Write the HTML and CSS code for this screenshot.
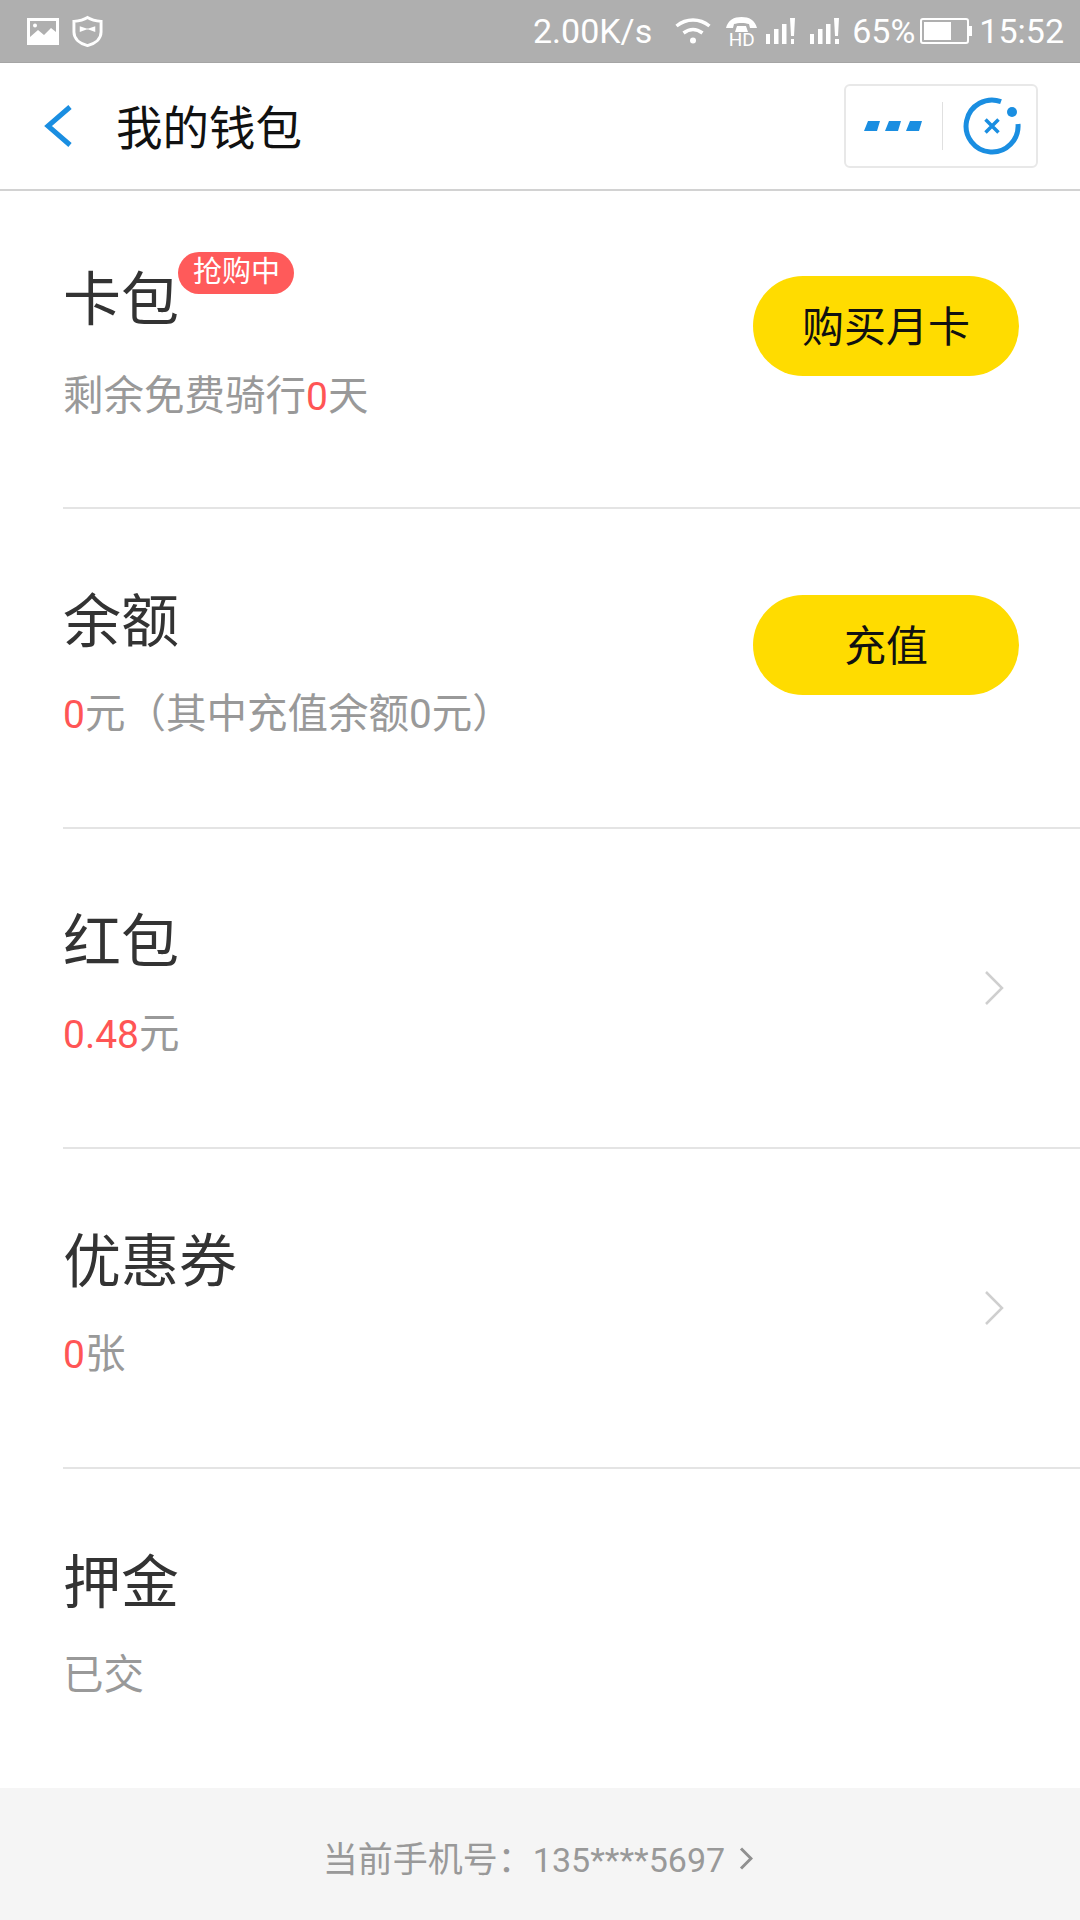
FILE: index.html
```html
<!DOCTYPE html>
<html lang="zh-CN">
<head>
  <meta charset="UTF-8">
  <title>我的钱包</title>
  <link rel="stylesheet" href="styles.css">
</head>
<body>
  <div class="statusbar">
    <div class="status-left">
      <svg width="32" height="28" viewBox="0 0 32 28"><path fill="#fff" fill-rule="evenodd" d="M0 1h32v27H0zM3 4v16l8-7 6 5 7-7 5 4V4zM8 6.500a2 2 0 1 1 0 4 2 2 0 0 1 0-4z"/></svg>
      <svg width="31" height="33" viewBox="0 0 32 33"><path fill="none" stroke="#fff" stroke-width="3" d="M16 2c4 2.500 8 3.500 14 4v11c0 7-6 12-14 14C8 29 2 24 2 17V6c6-.5 10-1.500 14-4z"/><path fill="#fff" d="M8 11l7 2.500h2l7-2.500v6l-7-2.500h-2L8 17z"/></svg>
    </div>
    <div class="status-right">
      <span class="speed">2.00K/s</span>
      <svg class="wifi" width="36" height="26" viewBox="0 0 36 26"><path fill="none" stroke="#fff" stroke-width="3.500" d="M1.500 8c10-8 23-8 33 0M8.500 15c6-4.500 13-4.500 19 0"/><circle cx="18" cy="22.500" r="3" fill="#fff"/></svg>
      <span class="hd">
        <svg width="31" height="16" viewBox="0 0 31 16"><path fill="#fff" d="M0 11C2 3 8 0 15.500 0S29 3 31 11h-7l-1-4c-4-1.500-11-1.500-15 0l-1 4z"/><path fill="#fff" d="M11 9h9l2 6H9z"/></svg>
        <span class="hd-text">HD</span>
      </span>
      <svg class="signal signal-one" width="33" height="27" viewBox="0 0 33 27"><path fill="#fff" d="M1 16h4v10H1zM9 11h4.500v15H9zM17 6h4.500v20H17zM25 0h5l-1 18h-3z"/><path fill="#fff" d="M26 21h3v5h-3z"/></svg>
      <svg class="signal" width="33" height="27" viewBox="0 0 33 27"><path fill="#fff" d="M1 16h4v10H1zM9 11h4.500v15H9zM17 6h4.500v20H17zM25 0h5l-1 18h-3z"/><path fill="#fff" d="M26 21h4v5h-4z"/></svg>
      <span class="battery-pct">65%</span>
      <span class="battery"><span class="battery-fill"></span></span>
      <span class="clock">15:52</span>
    </div>
  </div>

  <div class="header">
    <svg class="back" width="28" height="42" viewBox="0 0 28 42"><path fill="none" stroke="#1a8ee1" stroke-width="5" d="M26 2L4 21l22 19"/></svg>
    <div class="title">我的钱包</div>
    <div class="capsule">
      <svg class="more" width="58" height="10" viewBox="0 0 58 10"><path fill="#1a8ee1" d="M4 0h12l-3 10H0zM25 0h12l-3 10H21zM46 0h12l-3 10H42z"/></svg>
      <span class="capsule-line"></span>
      <svg class="scan" width="58" height="58" viewBox="0 0 58 58"><path fill="none" stroke="#1a8ee1" stroke-width="5" d="M38 4.600A26 26 0 1 0 55 27"/><circle cx="49" cy="15" r="5" fill="#1a8ee1"/><path fill="none" stroke="#1a8ee1" stroke-width="3.500" d="M22.500 22.500l13 13M35.500 22.500l-13 13"/></svg>
    </div>
  </div>

  <div class="list">
    <div class="row row-first">
      <div class="info">
        <div class="name">卡包<span class="tag">抢购中</span></div>
        <div class="desc">剩余免费骑行<span class="red">0</span>天</div>
      </div>
      <div class="btn">购买月卡</div>
    </div>
    <div class="row">
      <div class="info">
        <div class="name">余额</div>
        <div class="desc"><span class="red">0</span>元（其中充值余额0元）</div>
      </div>
      <div class="btn">充值</div>
    </div>
    <div class="row">
      <div class="info">
        <div class="name">红包</div>
        <div class="desc"><span class="red">0.48</span>元</div>
      </div>
      <svg class="arrow" width="20" height="36" viewBox="0 0 20 36"><path fill="none" stroke="#cfcfcf" stroke-width="2.500" d="M2 2l16 16L2 34"/></svg>
    </div>
    <div class="row">
      <div class="info">
        <div class="name">优惠券</div>
        <div class="desc"><span class="red">0</span>张</div>
      </div>
      <svg class="arrow" width="20" height="36" viewBox="0 0 20 36"><path fill="none" stroke="#cfcfcf" stroke-width="2.500" d="M2 2l16 16L2 34"/></svg>
    </div>
    <div class="row row-last">
      <div class="info">
        <div class="name">押金</div>
        <div class="desc">已交</div>
      </div>
    </div>
  </div>

  <div class="footer">
    <span>当前手机号：<span class="phone">135****5697</span></span>
    <svg class="footer-arrow" width="14" height="23" viewBox="0 0 14 23"><path fill="none" stroke="#909090" stroke-width="3" d="M2 1.500l10 10-10 10"/></svg>
  </div>
</body>
</html>
```

FILE: styles.css
```css
* {
  box-sizing: border-box;
}

body {
  margin: 0;
  width: 1080px;
  height: 1920px;
  background-color: #fff;
  font-family: Roboto, "Noto Sans CJK SC", sans-serif;
  display: flex;
  flex-direction: column;
  overflow: hidden;
}

.statusbar {
  height: 63px;
  flex-shrink: 0;
  background-color: #afafaf;
  border-bottom: 1px solid #a5a5a5;
  color: #fff;
  padding: 0 16px 0 27px;
  display: flex;
  align-items: center;
  justify-content: space-between;
}

.status-left {
  display: flex;
  align-items: center;
  gap: 13px;
}

.status-right {
  display: flex;
  align-items: center;
  font-size: 34px;
}

.speed {
  margin-right: 23px;
}

.wifi {
  margin-right: 15px;
}

.hd {
  width: 31px;
  margin-right: 8px;
  display: flex;
  flex-direction: column;
  align-items: center;
}

.hd-text {
  font-size: 19px;
  line-height: 13px;
}

.signal {
  margin-right: 10px;
}

.signal-one {
  margin-right: 11px;
}

.battery-pct {
  margin-right: 5px;
}

.battery {
  width: 49px;
  height: 26px;
  border: 2px solid #fff;
  border-radius: 3px;
  padding: 2px;
  margin-right: 10px;
  position: relative;
}

.battery::after {
  content: "";
  position: absolute;
  right: -5px;
  top: 6px;
  width: 3px;
  height: 10px;
  background-color: #fff;
}

.battery-fill {
  display: block;
  width: 66%;
  height: 100%;
  background-color: #fff;
}

.header {
  height: 128px;
  flex-shrink: 0;
  border-bottom: 2px solid #d2d2d2;
  padding: 0 42px 0 44px;
  display: flex;
  align-items: center;
}

.back {
  margin-right: 44px;
}

.title {
  flex: 1;
  font-size: 46.500px;
  color: #111;
  margin-bottom: 4px;
}

.capsule {
  width: 194px;
  height: 84px;
  border: 2px solid #e8e8e8;
  border-radius: 6px;
  padding: 0 15px 0 18px;
  display: flex;
  align-items: center;
  justify-content: space-between;
}

.capsule-line {
  width: 1px;
  height: 48px;
  background-color: #e0e0e0;
}

.list {
  flex: 1;
}

.row {
  height: 320px;
  margin-left: 63px;
  padding-right: 61px;
  border-bottom: 2px solid #e4e4e4;
  display: flex;
  align-items: center;
  justify-content: space-between;
}

.row-first {
  height: 318px;
}

.row-last {
  height: 319px;
  border-bottom: none;
}

.info {
  display: flex;
  flex-direction: column;
  gap: 34px;
  padding-bottom: 8px;
}

.row-first .info {
  gap: 38px;
  padding-bottom: 10px;
}

.name {
  font-size: 58px;
  line-height: 66px;
  color: #333;
  position: relative;
}

.tag {
  position: absolute;
  left: 115px;
  top: -15px;
  height: 42px;
  padding: 0 14px 0 15px;
  border-radius: 21px;
  background-color: #ff5a5a;
  color: #fff;
  font-size: 29px;
  line-height: 40px;
  white-space: nowrap;
}

.desc {
  font-size: 40.500px;
  line-height: 50px;
  color: #999;
}

.red {
  color: #f55;
  font-size: 39px;
}

.btn {
  width: 266px;
  height: 100px;
  margin-bottom: 46px;
  padding-bottom: 6px;
  border-radius: 50px;
  background-color: #ffdc00;
  color: #111;
  font-size: 42px;
  display: flex;
  align-items: center;
  justify-content: center;
}

.arrow {
  margin-right: 15px;
}

.footer {
  height: 132px;
  flex-shrink: 0;
  background-color: #f5f5f5;
  color: #999;
  font-size: 35px;
  padding: 5px 4px 0 0;
  display: flex;
  align-items: center;
  justify-content: center;
  gap: 14px;
}

.phone {
  font-size: 34px;
}

.footer-arrow {
  margin-top: 4px;
}
```
